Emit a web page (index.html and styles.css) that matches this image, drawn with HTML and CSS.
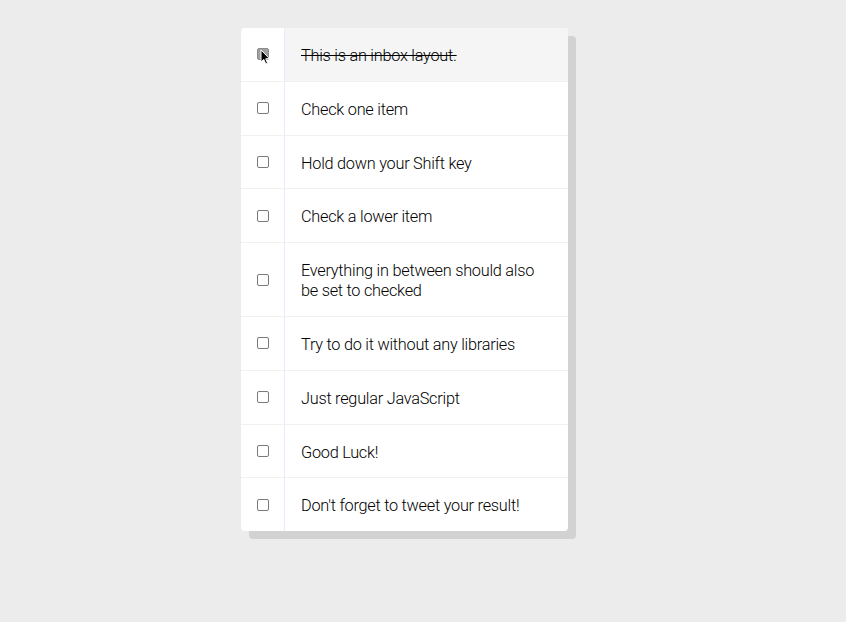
FILE: index.html
```html
<!DOCTYPE html>
<html>
<head>
<meta charset="utf-8">
<link rel="stylesheet" href="styles.css">
</head>
<body>
<div class="inbox">
  <div class="item">
    <span class="box-wrap">
      <input type="checkbox" checked>
      <svg class="cursor" width="10" height="16" viewBox="0 0 10 16"><path d="M1 1 L1 13 L3.8 10.4 L5.8 15 L7.6 14.2 L5.7 9.8 L9.4 9.6 Z" fill="#000" stroke="#fff" stroke-width="1"/></svg>
    </span>
    <p>This is an inbox layout.</p>
  </div>
  <div class="item"><span class="box-wrap"><input type="checkbox"></span><p>Check one item</p></div>
  <div class="item"><span class="box-wrap"><input type="checkbox"></span><p>Hold down your Shift key</p></div>
  <div class="item"><span class="box-wrap"><input type="checkbox"></span><p>Check a lower item</p></div>
  <div class="item"><span class="box-wrap"><input type="checkbox"></span><p>Everything in between should also be set to checked</p></div>
  <div class="item"><span class="box-wrap"><input type="checkbox"></span><p>Try to do it without any libraries</p></div>
  <div class="item"><span class="box-wrap"><input type="checkbox"></span><p>Just regular JavaScript</p></div>
  <div class="item"><span class="box-wrap"><input type="checkbox"></span><p>Good Luck!</p></div>
  <div class="item"><span class="box-wrap"><input type="checkbox"></span><p>Don't forget to tweet your result!</p></div>
</div>
</body>
</html>
```
FILE: styles.css
```css
html {
  background: #ececec;
}
body {
  margin: 0;
  padding: 28px 0 60px;
  font-family: Roboto, "Liberation Sans", sans-serif;
}
.inbox {
  width: 327px;
  margin-left: 241px;
  background: #fff;
  border-radius: 4px;
  box-shadow: 8px 8px 0 #d2d2d2;
}
.item {
  display: flex;
  align-items: center;
  border-bottom: 1px solid #f1f1f1;
}
.item:first-child p {
  border-top-right-radius: 4px;
}
.item:last-child {
  border-bottom: 0;
}
.box-wrap {
  position: relative;
  display: flex;
  width: 43px;
  justify-content: center;
  flex: none;
}
input[type="checkbox"] {
  appearance: none;
  -webkit-appearance: none;
  width: 12px;
  height: 12px;
  margin: 0 0 0 1px;
  border: 1px solid #7a7a7a;
  border-radius: 2px;
  background: #fff;
  box-sizing: border-box;
}
input[type="checkbox"]:checked {
  background: #a0a0a0;
  border-color: #8c8c8c;
}
.cursor {
  position: absolute;
  left: 19px;
  top: 1px;
}
.item p {
  margin: 0;
  flex: 1;
  align-self: stretch;
  display: flex;
  align-items: center;
  padding: 18px 16px 14.8px;
  font-size: 16.3px;
  line-height: 20px;
  font-weight: 300;
  letter-spacing: -0.25px;
  color: #000;
  border-left: 1px solid #e3ecfb;
}
.item .box-wrap:has(input:checked) + p {
  background: #f5f5f5;
  text-decoration: line-through;
}
```
